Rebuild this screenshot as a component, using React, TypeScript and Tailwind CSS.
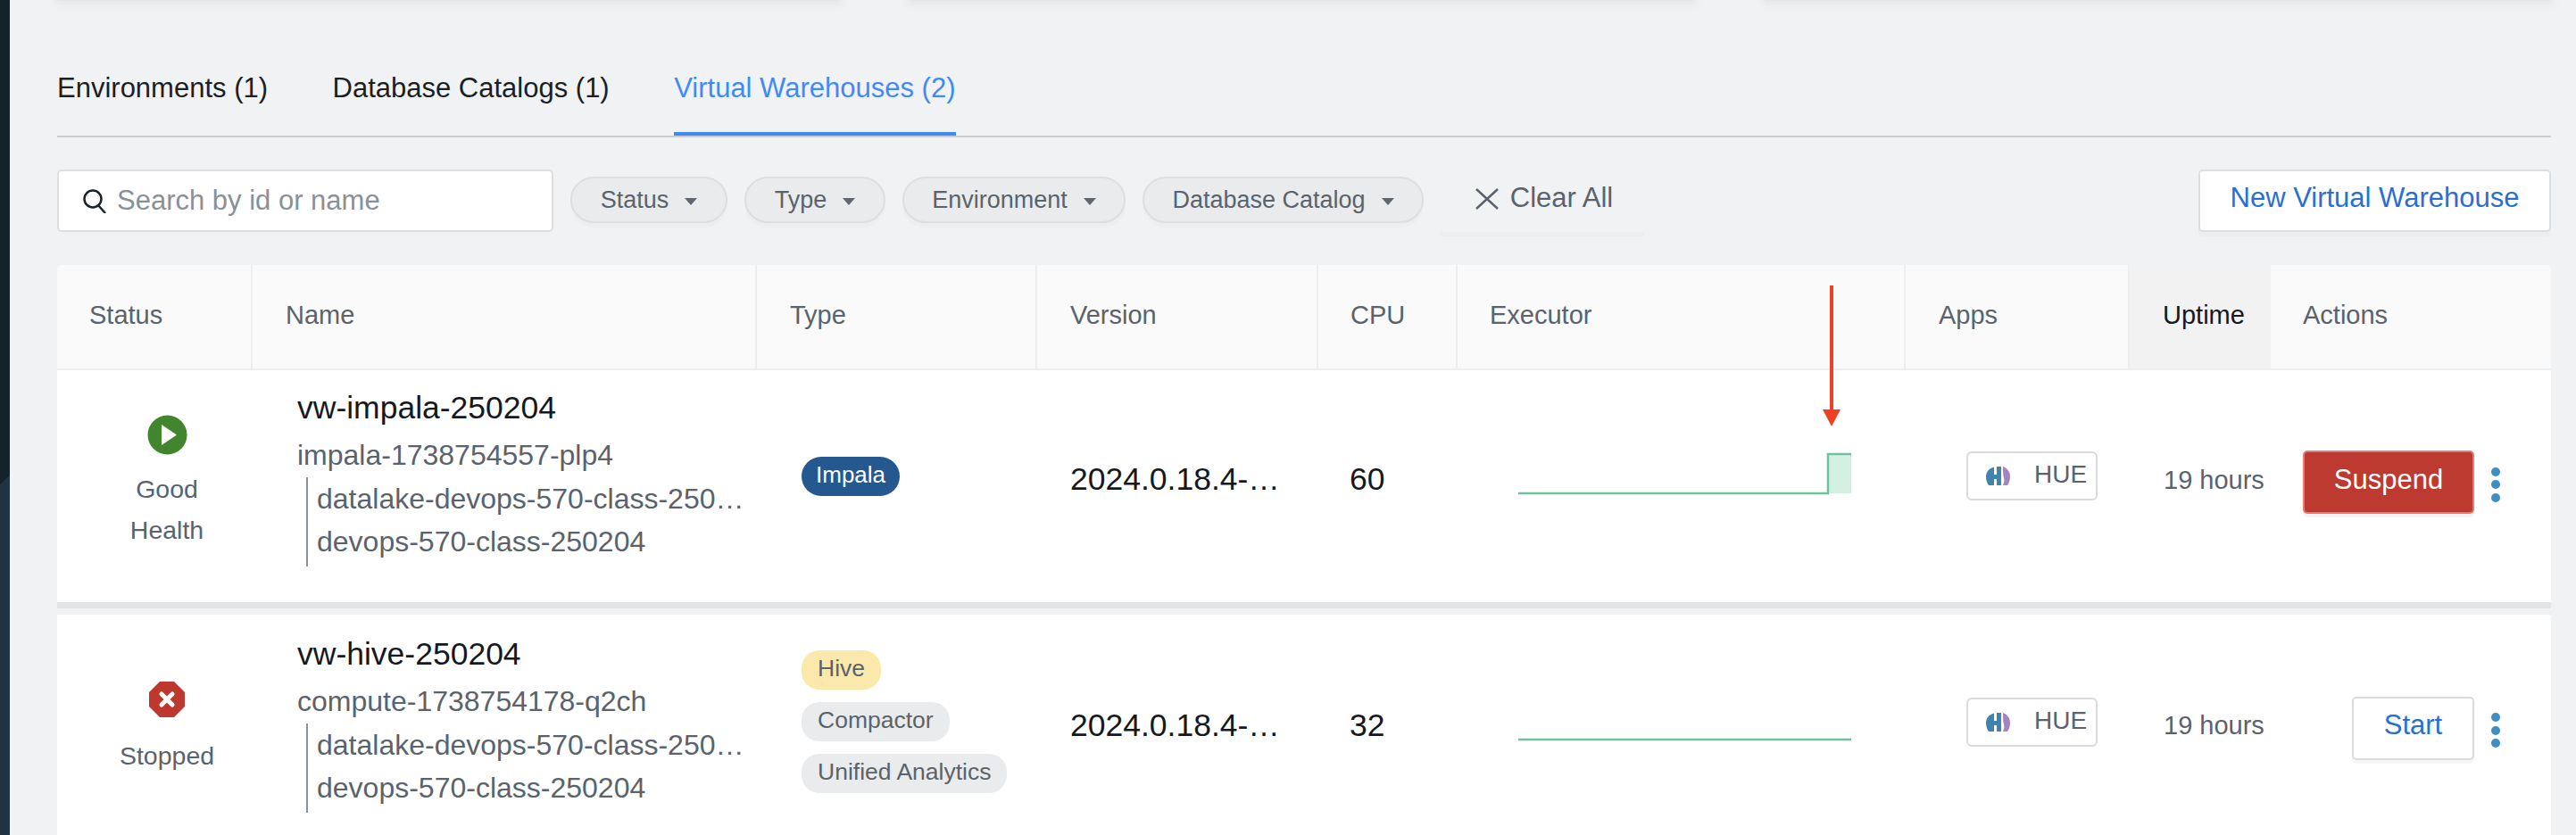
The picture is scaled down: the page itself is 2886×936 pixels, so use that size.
import React from 'react';

const font = "font-['Liberation_Sans',Arial,sans-serif]";

const Caret = () => (
  <svg width="14" height="8" viewBox="0 0 14 8" className="ml-[18px] mt-[3px]">
    <path d="M0 0h14L7 8z" fill="#5f6871" />
  </svg>
);

const FilterPill = ({ label, width }: { label: string; width: string }) => (
  <div className={`${width} h-[52px] rounded-full border-2 border-[#dcdee0] bg-[#e9ebed] shadow-[0_5px_0_#eceef0] flex items-center justify-center text-[27px] text-[#5a636c]`}>
    <span>{label}</span>
    <Caret />
  </div>
);

const HueIcon = () => (
  <svg width="27" height="21" viewBox="0 0 27 21">
    <path d="M13 0C5 0 0 5 0 11.5 0 15 1 18 3 21h6v-7h3v7h5V0z" fill="#3f83ae" />
    <rect x="9" y="0" width="3" height="9" fill="#fff" />
    <path d="M19 0c5 2 8 6 8 11 0 4-1 7-3 10h-5c1-3 2-5 1-8-1-3-1-8-1-13z" fill="#a583c0" />
  </svg>
);

const HueChip = () => (
  <div className="w-[147px] h-[55px] rounded-[6px] border-2 border-[#d8dadd] bg-white flex items-center pl-[20px] text-[28px] text-[#5a636c]">
    <HueIcon />
    <span className="ml-[27px] -mt-[3px]">HUE</span>
  </div>
);

const Dots = () => (
  <div className="flex flex-col gap-[4.5px] ml-[19px] mt-[5px]">
    <span className="w-[10px] h-[10px] rounded-full bg-[#3f8fc4]" />
    <span className="w-[10px] h-[10px] rounded-full bg-[#3f8fc4]" />
    <span className="w-[10px] h-[10px] rounded-full bg-[#3f8fc4]" />
  </div>
);

const Tag = ({ label, tone }: { label: string; tone: string }) => (
  <span className={`${tone} h-[44px] px-[18px] rounded-[20px] flex items-center text-[26.5px] text-[#5a636c] w-fit`}>
    <span className="-mt-[3px]">{label}</span>
  </span>
);

const columns = 'grid grid-cols-[219px_565px_314px_315px_156px_502px_251px_158px_314px]';

const Spark = ({ step }: { step: boolean }) => (
  <svg width="376" height="60" viewBox="0 0 376 60" className="block">
    {step && <rect x="347" y="2" width="26" height="44" fill="#d3f0e3" />}
    <path d={step ? 'M0 46h347V2h26' : 'M0 46h373'} fill="none" stroke="#6cc39d" strokeWidth="2.5" />
  </svg>
);

type RowProps = {
  status: React.ReactNode;
  name: string;
  id: string;
  tags: React.ReactNode;
  version: string;
  cpu: string;
  step: boolean;
  action: React.ReactNode;
  rowClass: string;
  namePad: string;
};

const Row = ({ status, name, id, tags, cpu, version, step, action, rowClass, namePad }: RowProps) => (
  <div className={`${columns} ${rowClass} bg-white items-center`}>
    <div className="flex flex-col items-center pl-[27px] pt-[8px] text-[28.5px] leading-[46px] text-[#5a636c] text-center">{status}</div>
    <div className={`pl-[50px] h-full ${namePad}`}>
      <div className="text-[35.5px] leading-[36px] text-[#15191e] whitespace-nowrap">{name}</div>
      <div className="text-[32px] leading-[36px] mt-[17px] text-[#5a636c] whitespace-nowrap">{id}</div>
      <div className="ml-[10px] mt-[7px] pl-[10px] border-l-2 border-[#8b9198] h-[100px] text-[32px] leading-[48px] text-[#5a636c] whitespace-nowrap">
        <div>datalake-devops-570-class-250…</div>
        <div>devops-570-class-250204</div>
      </div>
    </div>
    <div className="pl-[50px] pb-[7px] flex flex-col gap-[14px]">{tags}</div>
    <div className="pl-[37px] pt-[2px] text-[35.5px] text-[#15191e] whitespace-nowrap">{version}</div>
    <div className="pl-[35px] pt-[2px] text-[35.5px] text-[#15191e]">{cpu}</div>
    <div className="pl-[68px]">
      <Spark step={step} />
    </div>
    <div className="pl-[68px] pb-[7px]">
      <HueChip />
    </div>
    <div className="pl-[38px] pt-[3px] text-[29px] text-[#5a636c] whitespace-nowrap">19 hours</div>
    <div className="flex items-center justify-end pr-[57px] pt-[7px]">{action}</div>
  </div>
);

const headers = [
  { label: 'Status', className: 'pl-[36px] border-r-2 border-[#edeef0]' },
  { label: 'Name', className: 'pl-[37px] border-r-2 border-[#edeef0]' },
  { label: 'Type', className: 'pl-[37px] border-r-2 border-[#edeef0]' },
  { label: 'Version', className: 'pl-[37px] border-r-2 border-[#edeef0]' },
  { label: 'CPU', className: 'pl-[36px] border-r-2 border-[#edeef0]' },
  { label: 'Executor', className: 'pl-[36px] border-r-2 border-[#edeef0]' },
  { label: 'Apps', className: 'pl-[37px] border-r-2 border-[#edeef0]' },
  { label: 'Uptime', className: 'pl-[37px] bg-[#f2f2f3] text-[#15191e]' },
  { label: 'Actions', className: 'pl-[36px]' },
];

export default function App() {
  return (
    <div className={`${font} relative w-[2886px] h-[936px] overflow-hidden bg-[#f1f2f4] flex`}>
      {/* dark sidebar edge */}
      <div className="w-[11px] h-full shrink-0 bg-[linear-gradient(135deg,#14222a_384px,#1f3440_384px)]" />

      <div className="w-[2794px] ml-[53px]">
        {/* cards cut off above */}
        <div className="h-[10px] flex gap-[80px]">
          <div className="w-[876px] h-[1px] bg-[#e4e5e7] shadow-[0_1px_7px_3px_#e4e5e7]" />
          <div className="w-[877px] h-[1px] bg-[#e4e5e7] shadow-[0_1px_7px_3px_#e4e5e7]" />
          <div className="flex-1 h-[1px] bg-[#e4e5e7] shadow-[0_1px_7px_3px_#e4e5e7]" />
        </div>

        {/* tabs */}
        <div className="mt-[50px] h-[94px] border-b-2 border-[#c9cbce] flex gap-[72.5px] text-[31px] text-[#1b1f24]">
          <div className="pt-[16px]">Environments (1)</div>
          <div className="pt-[16px]">Database Catalogs (1)</div>
          <div className="pt-[16px] h-[92px] border-b-4 border-[#3f8bf5] text-[#3f8bf5]">Virtual Warehouses (2)</div>
        </div>

        {/* filters */}
        <div className="mt-[36px] h-[107px] flex items-start">
          <div className="w-[556px] h-[70px] rounded-[5px] border-2 border-[#dcdee0] bg-white flex items-center pl-[27px] text-[31px] text-[#8a9097]">
            <svg width="27" height="27" viewBox="0 0 27 27" fill="none" stroke="#1c2127" strokeWidth="2.5" className="mr-[11px] shrink-0">
              <circle cx="11" cy="11" r="9.5" />
              <path d="M17 18l8 9" />
            </svg>
            Search by id or name
          </div>
          <div className="flex gap-[19px] ml-[19px] mt-[8px]">
            <FilterPill label="Status" width="w-[176px]" />
            <FilterPill label="Type" width="w-[158px]" />
            <FilterPill label="Environment" width="w-[250px]" />
            <FilterPill label="Database Catalog" width="w-[315px]" />
          </div>
          <div className="ml-[18px] w-[229px] h-[70px] pb-[5px] pl-[5px] flex items-center justify-center text-[31px] text-[#5a636c] shadow-[0_5px_0_#eceef0]">
            <svg width="26" height="24" viewBox="0 0 26 24" stroke="#5a636c" strokeWidth="2.5" className="mr-[13px]">
              <path d="M1 1l24 22M25 1L1 23" />
            </svg>
            Clear All
          </div>
          <div className="ml-auto w-[395px] h-[70px] pb-[5px] rounded-[5px] border-2 border-[#dcdee0] bg-white shadow-[0_5px_0_#eceef0] flex items-center justify-center text-[31px] text-[#2a6fd0]">
            New Virtual Warehouse
          </div>
        </div>

        {/* table */}
        <div className={`${columns} h-[118px] bg-[#fafafa] border-b-2 border-[#edeef0] rounded-t-[5px] items-center text-[29px] text-[#5a636c]`}>
          {headers.map((h) => (
            <div key={h.label} className={`h-full flex items-center pb-[3px] ${h.className}`}>
              {h.label}
            </div>
          ))}
        </div>

        <Row
          rowClass="h-[260px] pb-[16px]"
          namePad="pt-[24px]"
          name="vw-impala-250204"
          id="impala-1738754557-plp4"
          version="2024.0.18.4-…"
          cpu="60"
          step
          status={
            <>
              <svg width="45" height="45" viewBox="0 0 45 45" className="mb-[15px]">
                <circle cx="22.5" cy="22.5" r="22" fill="#41862f" />
                <path d="M16 11l17 11.5L16 34z" fill="#fff" />
              </svg>
              <span>Good</span>
              <span>Health</span>
            </>
          }
          tags={
            <span className="h-[44px] px-[16px] rounded-[22px] bg-[#24588f] text-white text-[26px] flex items-center w-fit">
              <span className="-mt-[3px]">Impala</span>
            </span>
          }
          action={
            <>
              <button className="w-[192px] h-[71px] pb-[5px] rounded-[5px] border-2 border-[#e77b74] bg-[#bc3a2f] text-white text-[31px] shadow-[0_4px_0_#f4f4f4]">Suspend</button>
              <Dots />
            </>
          }
        />

        <div className="h-[7px] bg-[#e3e4e5]" />
        <div className="h-[7px]" />

        <Row
          rowClass="h-[247px]"
          namePad="pt-[26px]"
          name="vw-hive-250204"
          id="compute-1738754178-q2ch"
          version="2024.0.18.4-…"
          cpu="32"
          step={false}
          status={
            <>
              <svg width="40" height="40" viewBox="0 0 40 40" className="mb-[20px]">
                <path d="M12 0h16l12 12v16L28 40H12L0 28V12z" fill="#bf382f" />
                <path d="M14 14l12 12M26 14L14 26" stroke="#fff" strokeWidth="5" strokeLinecap="round" />
              </svg>
              <span>Stopped</span>
            </>
          }
          tags={
            <>
              <Tag label="Hive" tone="bg-[#fbe9ab]" />
              <Tag label="Compactor" tone="bg-[#e9ebed]" />
              <Tag label="Unified Analytics" tone="bg-[#e9ebed]" />
            </>
          }
          action={
            <>
              <button className="w-[137px] h-[71px] pb-[5px] rounded-[5px] border-2 border-[#d8dadd] bg-white text-[#2a6fd0] text-[31px] shadow-[0_4px_0_#f6f6f6]">Start</button>
              <Dots />
            </>
          }
        />
      </div>

      {/* annotation arrow drawn on the screenshot */}
      <svg width="22" height="160" viewBox="0 0 22 160" className="absolute left-[2041px] top-[320px]">
        <path d="M11 0v142" stroke="#ee4022" strokeWidth="4" />
        <path d="M1 139h20l-10 19z" fill="#ee4022" />
      </svg>
    </div>
  );
}
